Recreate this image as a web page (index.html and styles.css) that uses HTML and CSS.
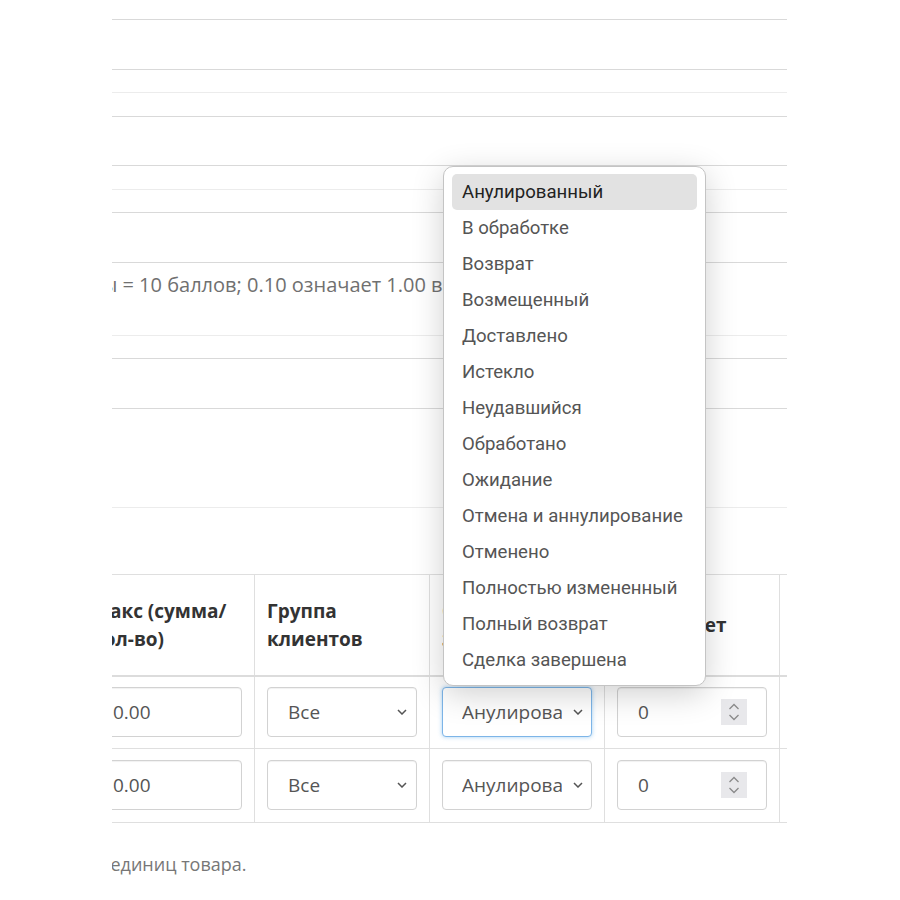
FILE: index.html
```html
<!DOCTYPE html>
<html lang="ru">
<head>
<meta charset="utf-8">
<title>Скидки</title>
<link rel="stylesheet" href="styles.css">
</head>
<body>
<div class="viewport">
  <div class="band b19"></div>
  <div class="band b49"></div>
  <div class="band light b22"></div>
  <div class="band b23"></div>
  <div class="band b48"></div>
  <div class="band light b23"></div>
  <div class="band b22"></div>
  <div class="band b49"></div>
  <div class="band light b72">
    <p class="help">Курс: 1.00 единица валюты = 10 баллов; 0.10 означает 1.00 валюты = 1 балл.</p>
  </div>
  <div class="band b22"></div>
  <div class="band b49"></div>
  <div class="band light b98"></div>
  <div class="band none b66"></div>

  <table class="grid">
    <thead>
      <tr>
        <th>Макс (сумма/<br>кол-во)</th>
        <th>Группа<br>клиентов</th>
        <th>Статус<br>заказа</th>
        <th>Приоритет</th>
        <th></th>
      </tr>
    </thead>
    <tbody>
      <tr>
        <td><div class="field">0.00</div></td>
        <td><div class="field select"><span class="val">Все</span><svg class="chev" width="10" height="6" viewBox="0 0 10 6"><path d="M1 1l4 4 4-4" fill="none" stroke="#555" stroke-width="1.5"/></svg></div></td>
        <td><div class="field select status focus"><span class="val clip">Анулированный</span><svg class="chev" width="10" height="6" viewBox="0 0 10 6"><path d="M1 1l4 4 4-4" fill="none" stroke="#555" stroke-width="1.5"/></svg></div></td>
        <td><div class="field number"><span class="val">0</span><span class="spin"><svg width="14" height="22" viewBox="0 0 14 22"><path d="M2.5 8l4.5-4.5 4.5 4.5M2.5 14l4.5 4.5 4.5-4.5" fill="none" stroke="#8a8a8a" stroke-width="1.3"/></svg></span></div></td>
        <td></td>
      </tr>
      <tr>
        <td><div class="field">0.00</div></td>
        <td><div class="field select"><span class="val">Все</span><svg class="chev" width="10" height="6" viewBox="0 0 10 6"><path d="M1 1l4 4 4-4" fill="none" stroke="#555" stroke-width="1.5"/></svg></div></td>
        <td><div class="field select status"><span class="val clip">Анулированный</span><svg class="chev" width="10" height="6" viewBox="0 0 10 6"><path d="M1 1l4 4 4-4" fill="none" stroke="#555" stroke-width="1.5"/></svg></div></td>
        <td><div class="field number"><span class="val">0</span><span class="spin"><svg width="14" height="22" viewBox="0 0 14 22"><path d="M2.5 8l4.5-4.5 4.5 4.5M2.5 14l4.5 4.5 4.5-4.5" fill="none" stroke="#8a8a8a" stroke-width="1.3"/></svg></span></div></td>
        <td></td>
      </tr>
    </tbody>
  </table>
  <p class="note">Применяется для минимального количества единиц товара.</p>
</div>

<ul class="menu">
  <li class="active">Анулированный</li>
  <li>В обработке</li>
  <li>Возврат</li>
  <li>Возмещенный</li>
  <li>Доставлено</li>
  <li>Истекло</li>
  <li>Неудавшийся</li>
  <li>Обработано</li>
  <li>Ожидание</li>
  <li>Отмена и аннулирование</li>
  <li>Отменено</li>
  <li>Полностью измененный</li>
  <li>Полный возврат</li>
  <li>Сделка завершена</li>
</ul>
</body>
</html>
```
FILE: styles.css
```css
html, body {
  margin: 0;
  padding: 0;
  background: #fff;
}
body {
  font-family: "Open Sans", "Liberation Sans", sans-serif;
  color: #333;
  position: relative;
  min-height: 900px;
}
.viewport {
  margin-left: 112px;
  width: 675px;
  height: 900px;
  overflow: hidden;
}
.band {
  border-bottom: 1px solid #d9d9d9;
  box-sizing: content-box;
}
.band.light { border-bottom-color: #ececec; }
.band.none { border-bottom: 0; }
.b19 { height: 19px; }
.b22 { height: 22px; }
.b23 { height: 23px; }
.b48 { height: 48px; }
.b49 { height: 49px; }
.b66 { height: 66px; }
.b72 { height: 72px; }
.b98 { height: 98px; }

.help {
  margin: 0;
  padding-top: 8px;
  font-size: 20px;
  line-height: 28px;
  color: #707070;
  white-space: nowrap;
  text-indent: -259px;
}

.grid {
  border-collapse: collapse;
  table-layout: fixed;
  width: 875px;
  margin-left: -33px;
}
.grid th, .grid td {
  width: 150px;
  border: 1px solid #dfdfdf;
  padding: 0 12px;
}
.grid th {
  height: 100px;
  text-align: left;
  vertical-align: middle;
  font-size: 19px;
  line-height: 28px;
  font-weight: 700;
  color: #333;
  border-bottom: 2px solid #dcdcdc;
}
.grid td {
  height: 50px;
  padding-top: 10px;
  padding-bottom: 11px;
}
.grid tbody tr + tr td {
  padding-top: 11px;
  padding-bottom: 12px;
}

.field {
  box-sizing: border-box;
  width: 150px;
  height: 50px;
  display: flex;
  align-items: center;
  border: 1px solid #d2d2d2;
  border-radius: 4px;
  padding: 0 20px;
  font-size: 19px;
  color: #555;
  background: #fff;
  box-shadow: inset 0 1px 1px rgba(0,0,0,0.06);
  white-space: nowrap;
}
.select {
  padding: 0 9px 0 20px;
  justify-content: space-between;
}
.select .val {
  flex: 0 0 auto;
  overflow: hidden;
}
.select.status {
  padding-left: 19px;
  padding-right: 8px;
}
.select .val.clip {
  width: 100px;
  flex: 0 0 100px;
}
.select.focus {
  border-color: #7db5e8;
  box-shadow: 0 0 4px rgba(102,175,233,0.6);
}
.chev { flex: 0 0 auto; }
.number {
  justify-content: space-between;
  padding-right: 19px;
}
.spin {
  width: 26px;
  height: 26px;
  background: #e8e8eb;
  display: flex;
  align-items: center;
  justify-content: center;
}

.note {
  margin: 28px 0 0;
  font-size: 18px;
  line-height: 26px;
  color: #777;
  white-space: nowrap;
  text-indent: -401px;
}

.menu {
  position: absolute;
  left: 443px;
  top: 166px;
  width: 263px;
  box-sizing: border-box;
  margin: 0;
  padding: 7px 8px;
  list-style: none;
  background: #fff;
  border: 1px solid #c4c4c4;
  border-radius: 10px;
  box-shadow: 0 8px 32px rgba(0,0,0,0.19);
  font-family: Roboto, "Noto Sans", sans-serif;
  font-size: 18.6px;
  color: #555;
}
.menu li {
  height: 36px;
  line-height: 36px;
  padding-left: 10px;
  border-radius: 5px;
  white-space: nowrap;
}
.menu li.active {
  background: #e2e2e2;
  color: #222;
}
```
